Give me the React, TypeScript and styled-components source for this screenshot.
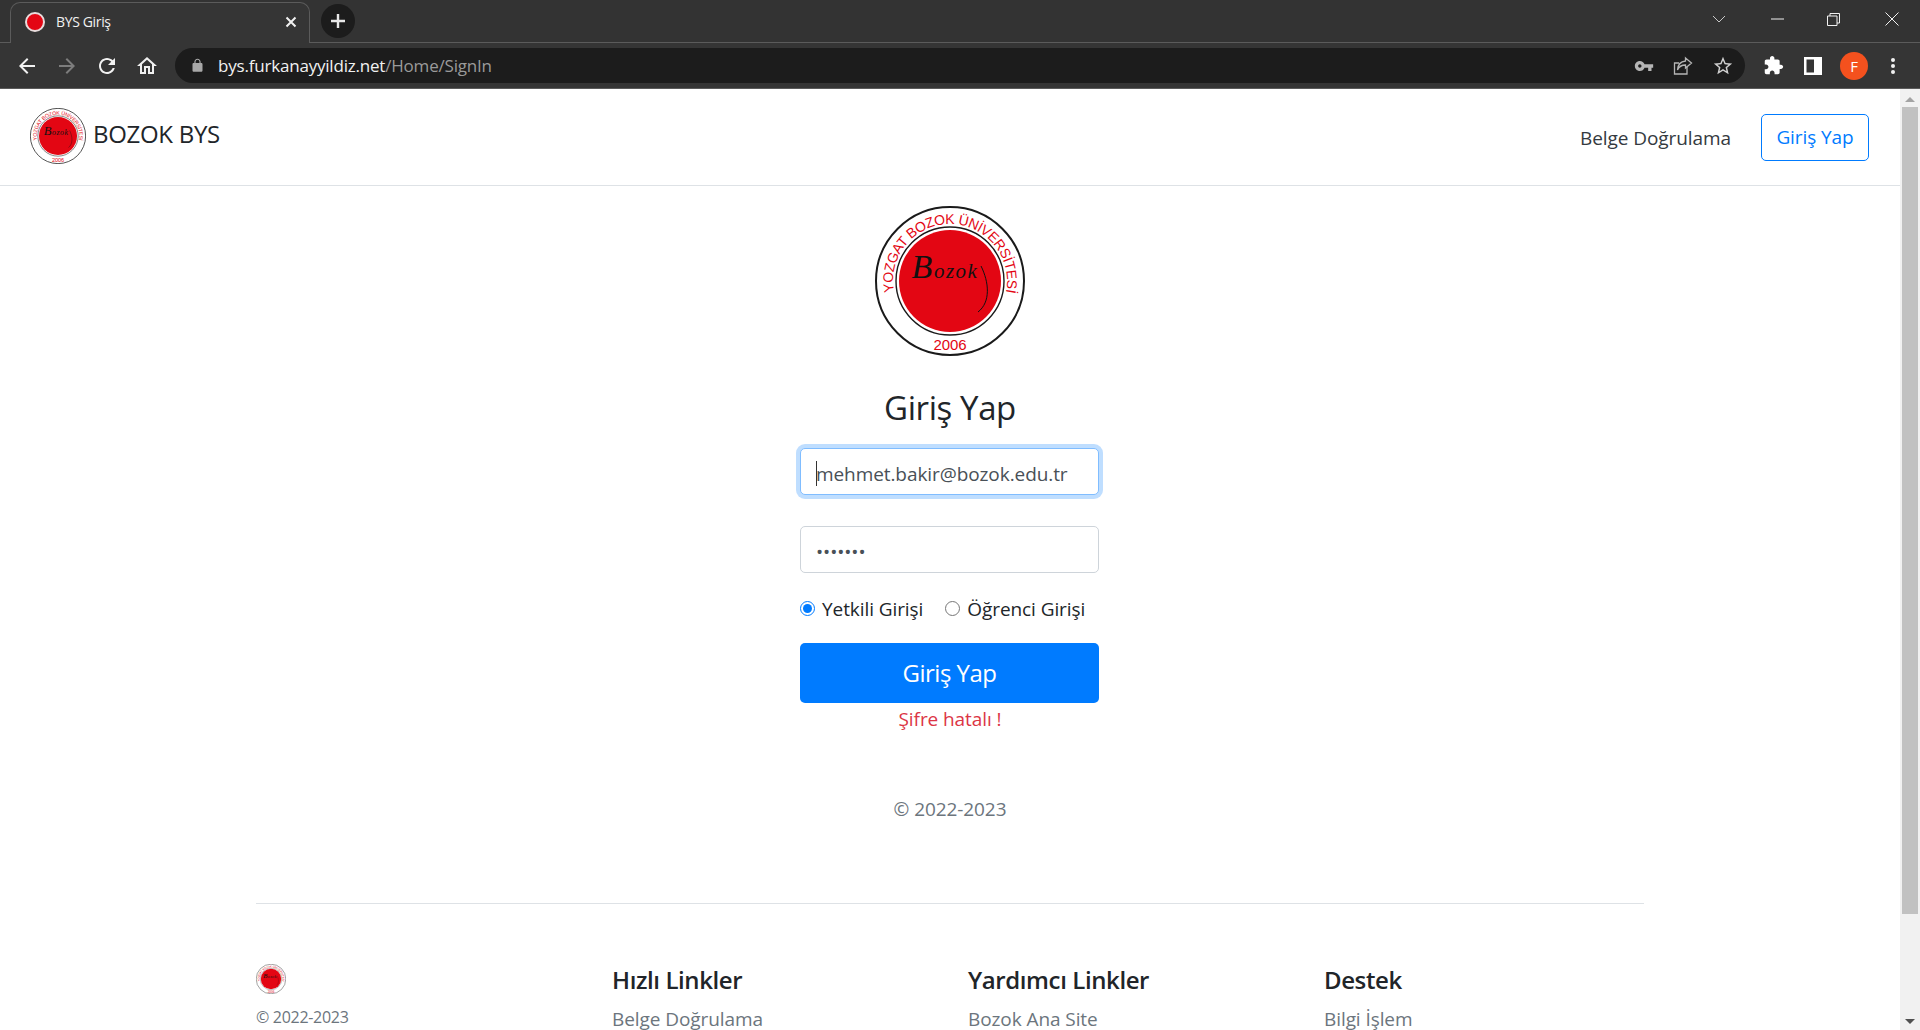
import React from "react";
import styled, { createGlobalStyle } from "styled-components";

const GlobalStyle = createGlobalStyle`
  html, body {
    margin: 0;
    padding: 0;
    height: 100%;
    overflow: hidden;
    background: #fff;
  }
  * { box-sizing: border-box; }
`;

const FONT = `"Open Sans", "Noto Sans", "Liberation Sans", sans-serif`;

const Shell = styled.div`
  height: 1030px;
  display: flex;
  flex-direction: column;
  font-family: ${FONT};
  overflow: hidden;
`;

/* browser chrome */
const TabStrip = styled.div`
  height: 43px;
  flex: none;
  background: #333333;
  display: flex;
  align-items: flex-end;
  padding-left: 10px;
  border-bottom: 1px solid #5b5b5b;
`;

const Tab = styled.div`
  width: 300px;
  height: 41px;
  margin-bottom: -1px;
  background: #353535;
  border: 1px solid #5b5b5b;
  border-bottom: none;
  border-radius: 10px 10px 0 0;
  display: flex;
  align-items: center;
  padding: 0 12px 2px 14px;
  color: #f1f1f1;
  font-size: 14px;
  letter-spacing: -0.35px;
`;

const Favicon = styled.span`
  width: 20px;
  height: 20px;
  border-radius: 50%;
  background: #e30613;
  border: 2.5px solid #e9dcdc;
  margin-right: 11px;
  flex: none;
`;

const TabTitle = styled.span`
  flex: 1;
  margin-top: -2px;
`;

const NewTab = styled.div`
  width: 34px;
  height: 34px;
  border-radius: 50%;
  background: #1c1c1c;
  margin: 0 0 4px 11px;
  display: flex;
  align-items: center;
  justify-content: center;
`;

const WindowControls = styled.div`
  margin-left: auto;
  align-self: stretch;
  display: flex;
  align-items: center;
  padding-bottom: 4px;
`;

const WindowButton = styled.div<{ $w: number }>`
  width: ${(p) => p.$w}px;
  display: flex;
  justify-content: center;
`;

const Toolbar = styled.div`
  height: 46px;
  flex: none;
  background: #353535;
  border-bottom: 1px solid #5b5b5b;
  display: flex;
  align-items: center;
`;

const NavIcons = styled.div`
  display: flex;
  width: 175px;
  padding-left: 15px;
  gap: 16px;
`;

const Omnibox = styled.div`
  width: 1570px;
  height: 35px;
  border-radius: 18px;
  background: #1c1c1c;
  display: flex;
  align-items: center;
  padding: 0 11px 0 15px;
`;

const Url = styled.div`
  margin-left: 13px;
  flex: 1;
  color: #f1f1f1;
  font-size: 17px;
  letter-spacing: -0.2px;
`;

const UrlRest = styled.span`
  color: #9a9a9a;
`;

const OmniIcons = styled.div`
  display: flex;
  align-items: center;
  gap: 19px;
`;

const ToolIcons = styled.div`
  display: flex;
  align-items: center;
  margin-left: 18px;
  gap: 18px;
`;

const Avatar = styled.div`
  width: 28px;
  height: 28px;
  border-radius: 50%;
  background: #f4511e;
  color: #fff;
  font-size: 15px;
  display: flex;
  align-items: center;
  justify-content: center;
`;

/* page */
const Viewport = styled.div`
  flex: 1;
  min-height: 0;
  display: flex;
`;

const Page = styled.div`
  flex: 1;
  min-width: 0;
  overflow: hidden;
  color: #212529;
  font-size: 19px;
  letter-spacing: -0.08px;
  line-height: 1.5;
`;

const Scrollbar = styled.div`
  width: 20px;
  flex: none;
  background: #f1f1f1;
  display: flex;
  flex-direction: column;
  align-items: center;
  padding-top: 8px;
`;

const ScrollThumb = styled.div`
  width: 16px;
  height: 807px;
  background: #c1c1c1;
  margin: 5px 0 auto;
`;

const ScrollArrow = styled.div<{ $down?: boolean }>`
  width: 0;
  height: 0;
  border-left: 5px solid transparent;
  border-right: 5px solid transparent;
  ${(p) => (p.$down ? "border-top: 5px solid #505050; margin-bottom: 6px;" : "border-bottom: 5px solid #a3a3a3;")}
`;

const Navbar = styled.nav`
  height: 97px;
  border-bottom: 1px solid #dee2e6;
  display: flex;
  align-items: flex-start;
  padding: 19px 31px 0 30px;
`;

const Brand = styled.div`
  display: flex;
  align-items: center;
  font-size: 24px;
  letter-spacing: -0.3px;
  line-height: 1;
  gap: 7px;
  padding-bottom: 6px;
`;

const BrandText = styled.span`
  margin-top: -4px;
`;

const NavLink = styled.a`
  margin-left: auto;
  margin-top: 16px;
  color: #343a40;
`;

const OutlineButton = styled.a`
  margin: 6px 0 0 30px;
  width: 108px;
  height: 47px;
  border: 1px solid #007bff;
  border-radius: 5px;
  color: #007bff;
  display: flex;
  align-items: center;
  justify-content: center;
`;

const Main = styled.main`
  display: flex;
  flex-direction: column;
  align-items: center;
  padding-top: 20px;
`;

const Heading = styled.h1`
  margin: 32px 0 20px;
  font-size: 33px;
  font-weight: 400;
  line-height: 1.2;
  letter-spacing: -0.4px;
`;

const Form = styled.form`
  width: 300px;
  display: flex;
  flex-direction: column;
`;

const FieldWrap = styled.div`
  position: relative;
  margin-bottom: 31px;
`;

const Caret = styled.span`
  position: absolute;
  left: 16px;
  top: 13px;
  width: 1px;
  height: 25px;
  background: #333;
`;

const Field = styled.input<{ $focused?: boolean }>`
  display: block;
  width: 299px;
  height: 47px;
  padding: 5px 15px 0;
  font: inherit;
  letter-spacing: inherit;
  color: #495057;
  background: #fff;
  border: 1px solid ${(p) => (p.$focused ? "#80bdff" : "#ced4da")};
  border-radius: 5px;
  outline: none;
  box-shadow: ${(p) => (p.$focused ? "0 0 0 4px rgba(0, 123, 255, 0.25)" : "none")};
`;

const RadioRow = styled.div`
  display: flex;
  align-items: center;
  height: 30px;
  margin-top: -9px;
`;

const RadioLabel = styled.label`
  display: flex;
  align-items: center;
  flex: none;
  white-space: nowrap;
  margin-right: 22px;
`;

const Radio = styled.input`
  width: 15px;
  height: 15px;
  margin: 0 7px 3px 0;
  flex: none;
  accent-color: #007bff;
`;

const SubmitButton = styled.button`
  margin-top: 18px;
  height: 60px;
  width: 299px;
  border: none;
  border-radius: 5px;
  background: #007bff;
  color: #fff;
  font-family: inherit;
  font-size: 24px;
  letter-spacing: -0.5px;
`;

const ErrorText = styled.div`
  color: #dc3545;
  text-align: center;
  margin-top: 2px;
`;

const CenterCopy = styled.p`
  margin: 62px 0 0;
  color: #6c757d;
`;

const Footer = styled.footer`
  width: 1388px;
  margin: 79px auto 0;
  border-top: 1px solid #dee2e6;
  padding-top: 60px;
  display: grid;
  grid-template-columns: repeat(4, 356px);
`;

const FooterBrand = styled.div`
  display: flex;
  flex-direction: column;
`;

const SmallCopy = styled.small`
  margin-top: 11px;
  color: #6c757d;
  font-size: 16px;
  letter-spacing: -0.3px;
`;

const FooterHeading = styled.h5`
  margin: 0 0 11px;
  font-size: 24px;
  font-weight: 600;
  line-height: 1.2;
  letter-spacing: -0.4px;
  padding-top: 2px;
`;

const FooterLink = styled.a`
  color: #6c757d;
  display: block;
`;

/* drawings */
const Glyph: React.FC<{ d: string; size?: number; color?: string }> = ({ d, size = 24, color = "#f1f1f1" }) => (
  <svg width={size} height={size} viewBox="0 0 24 24" fill={color} style={{ flex: "none" }}>
    <path d={d} />
  </svg>
);

const Seal: React.FC<{ size: number }> = ({ size }) => (
  <svg width={size} height={size} viewBox="0 0 150 150" style={{ flex: "none" }}>
    <circle cx="75" cy="75" r="74" fill="#fff" stroke="#1a1a1a" strokeWidth="2" />
    <circle cx="75" cy="75" r="54" fill="#fff" stroke="#1a1a1a" strokeWidth="1.4" />
    <circle cx="75" cy="75" r="51" fill="#e30613" />
    <defs>
      <path id={`seal-arc-${size}`} d="M 25.6 103.5 A 57 57 0 1 1 124.4 103.5" />
    </defs>
    <text fontFamily="Liberation Sans, sans-serif" fontSize="14" fill="#e30613" letterSpacing="-0.4">
      <textPath href={`#seal-arc-${size}`} startOffset="50%" textAnchor="middle">
        YOZGAT BOZOK ÜNİVERSİTESİ
      </textPath>
    </text>
    <text x="75" y="144" fontFamily="Liberation Sans, sans-serif" fontSize="15" fill="#e30613" textAnchor="middle">
      2006
    </text>
    <text x="70" y="72" fontFamily="Liberation Serif, serif" fontStyle="italic" fontSize="21" fill="#111" textAnchor="middle" letterSpacing="1.5">
      <tspan fontSize="34">B</tspan>ozok
    </text>
    <path d="M106 60 C114 76 116 96 103 106" fill="none" stroke="#111" strokeWidth="1" />
  </svg>
);

const icons = {
  back: "M20 11H7.83l5.59-5.59L12 4l-8 8 8 8 1.41-1.41L7.83 13H20v-2z",
  forward: "M12 4l-1.41 1.41L16.17 11H4v2h12.17l-5.58 5.59L12 20l8-8z",
  reload:
    "M17.65 6.35C16.2 4.9 14.21 4 12 4c-4.42 0-7.99 3.58-7.99 8s3.57 8 7.99 8c3.73 0 6.84-2.55 7.73-6h-2.08c-.82 2.33-3.04 4-5.65 4-3.31 0-6-2.69-6-6s2.69-6 6-6c1.66 0 3.14.69 4.22 1.78L13 11h7V4l-2.35 2.35z",
  home: "M12 5.69l5 4.5V18h-2v-6H9v6H7v-7.81l5-4.5M12 3L2 12h3v8h6v-6h2v6h6v-8h3L12 3z",
  lock: "M18 8h-1V6c0-2.76-2.24-5-5-5S7 3.24 7 6v2H6c-1.1 0-2 .9-2 2v10c0 1.1.9 2 2 2h12c1.1 0 2-.9 2-2V10c0-1.1-.9-2-2-2zm-2.9 0H8.9V6c0-1.71 1.39-3.1 3.1-3.1 1.71 0 3.1 1.39 3.1 3.1v2z",
  key: "M12.65 10C11.83 7.67 9.61 6 7 6c-3.31 0-6 2.69-6 6s2.69 6 6 6c2.61 0 4.83-1.67 5.65-4H17v4h4v-4h2v-4H12.65zM7 14c-1.1 0-2-.9-2-2s.9-2 2-2 2 .9 2 2-.9 2-2 2z",
  star: "M22 9.24l-7.19-.62L12 2 9.19 8.63 2 9.24l5.46 4.73L5.82 21 12 17.27 18.18 21l-1.63-7.03L22 9.24zM12 15.4l-3.76 2.27 1-4.28-3.32-2.88 4.38-.38L12 6.1l1.71 4.04 4.38.38-3.32 2.88 1 4.28L12 15.4z",
  puzzle:
    "M20.5 11H19V7c0-1.1-.9-2-2-2h-4V3.5C13 2.12 11.88 1 10.5 1S8 2.12 8 3.5V5H4c-1.1 0-1.99.9-1.99 2v3.8H3.5c1.49 0 2.7 1.21 2.7 2.7s-1.21 2.7-2.7 2.7H2V20c0 1.1.9 2 2 2h3.8v-1.5c0-1.49 1.21-2.7 2.7-2.7 1.49 0 2.7 1.21 2.7 2.7V22H17c1.1 0 2-.9 2-2v-4h1.5c1.38 0 2.5-1.12 2.5-2.5S21.88 11 20.5 11z",
};

const App: React.FC = () => {
  return (
    <Shell>
      <GlobalStyle />
      <TabStrip>
        <Tab>
          <Favicon />
          <TabTitle>BYS Giriş</TabTitle>
          <svg width="12" height="12" viewBox="0 0 12 12" stroke="#f1f1f1" strokeWidth="2">
            <path d="M1.5 1.5l9 9M10.5 1.5l-9 9" />
          </svg>
        </Tab>
        <NewTab>
          <svg width="16" height="16" viewBox="0 0 16 16" stroke="#e8e8e8" strokeWidth="2.4">
            <path d="M8 1v14M1 8h14" />
          </svg>
        </NewTab>
        <WindowControls>
          <WindowButton $w={66}>
            <svg width="14" height="8" viewBox="0 0 14 8" fill="none" stroke="#c8c8c8">
              <path d="M1 1l6 6 6-6" />
            </svg>
          </WindowButton>
          <WindowButton $w={50}>
            <svg width="13" height="2" viewBox="0 0 13 2" stroke="#f1f1f1">
              <path d="M0 1h13" />
            </svg>
          </WindowButton>
          <WindowButton $w={62}>
            <svg width="13" height="13" viewBox="0 0 13 13" fill="none" stroke="#f1f1f1">
              <path d="M.5 3h9.500v9.500H.5zM3 3V.5h9.500V10H10" />
            </svg>
          </WindowButton>
          <WindowButton $w={56}>
            <svg width="14" height="14" viewBox="0 0 14 14" stroke="#f1f1f1">
              <path d="M.5.5l13 13M13.500.5l-13 13" />
            </svg>
          </WindowButton>
        </WindowControls>
      </TabStrip>
      <Toolbar>
        <NavIcons>
          <Glyph d={icons.back} />
          <Glyph d={icons.forward} color="#7d7d7d" />
          <Glyph d={icons.reload} />
          <Glyph d={icons.home} />
        </NavIcons>
        <Omnibox>
          <Glyph d={icons.lock} size={15} color="#a8a8a8" />
          <Url>
            bys.furkanayyildiz.net<UrlRest>/Home/SignIn</UrlRest>
          </Url>
          <OmniIcons>
            <Glyph d={icons.key} size={20} color="#b5b5b5" />
            <svg width="20" height="20" viewBox="0 0 20 20" fill="none" stroke="#b5b5b5" strokeWidth="1.3">
              <path d="M14 11v7H1.500V7H6" />
              <path d="M12.500 2l6 5-6 5V9C8.500 9 6 10.500 4.500 14c.3-5 3-8.500 8-9z" />
            </svg>
            <Glyph d={icons.star} size={22} color="#d0d0d0" />
          </OmniIcons>
        </Omnibox>
        <ToolIcons>
          <Glyph d={icons.puzzle} size={21} color="#fff" />
          <svg width="18" height="18" viewBox="0 0 18 18" fill="#fff" style={{ marginLeft: 2 }}>
            <path d="M0 0h18v18H0zM2.500 2.500v13H10v-13z" fillRule="evenodd" />
          </svg>
          <Avatar>F</Avatar>
          <svg width="6" height="18" viewBox="0 0 6 18" fill="#f1f1f1" style={{ marginLeft: 4 }}>
            <circle cx="3" cy="3" r="2" />
            <circle cx="3" cy="9" r="2" />
            <circle cx="3" cy="15" r="2" />
          </svg>
        </ToolIcons>
      </Toolbar>
      <Viewport>
        <Page>
          <Navbar>
            <Brand>
              <Seal size={56} />
              <BrandText>BOZOK BYS</BrandText>
            </Brand>
            <NavLink>Belge Doğrulama</NavLink>
            <OutlineButton>Giriş Yap</OutlineButton>
          </Navbar>
          <Main>
            <Seal size={150} />
            <Heading>Giriş Yap</Heading>
            <Form>
              <FieldWrap>
                <Field $focused readOnly value="mehmet.bakir@bozok.edu.tr" />
                <Caret />
              </FieldWrap>
              <FieldWrap>
                <Field readOnly type="password" value="1234567" />
              </FieldWrap>
              <RadioRow>
                <RadioLabel>
                  <Radio type="radio" name="role" defaultChecked />
                  Yetkili Girişi
                </RadioLabel>
                <RadioLabel>
                  <Radio type="radio" name="role" />
                  Öğrenci Girişi
                </RadioLabel>
              </RadioRow>
              <SubmitButton type="button">Giriş Yap</SubmitButton>
              <ErrorText>Şifre hatalı !</ErrorText>
            </Form>
            <CenterCopy>© 2022-2023</CenterCopy>
          </Main>
          <Footer>
            <FooterBrand>
              <Seal size={30} />
              <SmallCopy>© 2022-2023</SmallCopy>
            </FooterBrand>
            <div>
              <FooterHeading>Hızlı Linkler</FooterHeading>
              <FooterLink>Belge Doğrulama</FooterLink>
            </div>
            <div>
              <FooterHeading>Yardımcı Linkler</FooterHeading>
              <FooterLink>Bozok Ana Site</FooterLink>
            </div>
            <div>
              <FooterHeading>Destek</FooterHeading>
              <FooterLink>Bilgi İşlem</FooterLink>
            </div>
          </Footer>
        </Page>
        <Scrollbar>
          <ScrollArrow />
          <ScrollThumb />
          <ScrollArrow $down />
        </Scrollbar>
      </Viewport>
    </Shell>
  );
};

export default App;
